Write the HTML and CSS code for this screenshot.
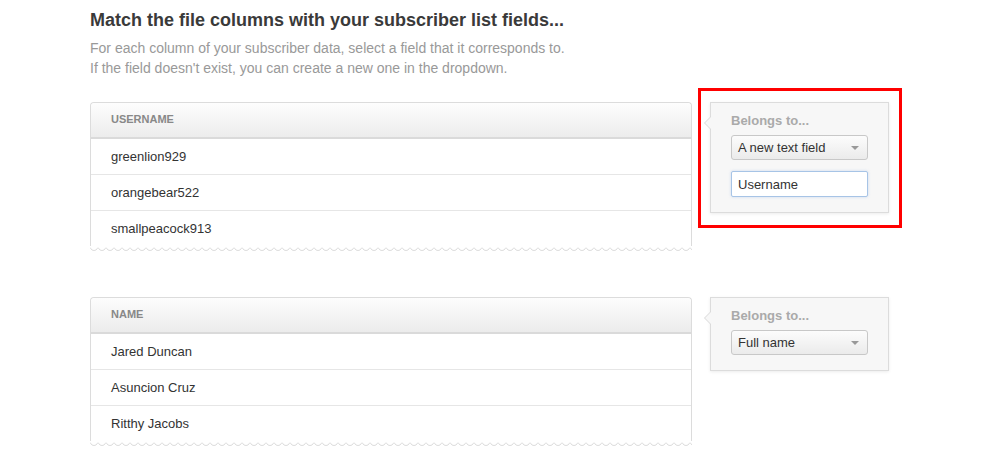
FILE: index.html
```html
<!DOCTYPE html>
<html lang="en">

<head>
    <meta charset="UTF-8" />
    <title>Match columns</title>
    <link rel="stylesheet" href="styles.css">
</head>

<body>
    <div class="page">
        <h1>Match the file columns with your subscriber list fields...</h1>
        <p class="intro">
            For each column of your subscriber data, select a field that it corresponds to.<br />
            If the field doesn't exist, you can create a new one in the dropdown.
        </p>

        <div class="column-row">
            <div class="card">
                <div class="card-body">
                    <div class="card-head">USERNAME</div>
                    <div class="card-row">greenlion929</div>
                    <div class="card-row">orangebear522</div>
                    <div class="card-row last">smallpeacock913</div>
                </div>
                <svg class="wave" width="602" height="6" viewBox="0 0 602 6">
                    <defs>
                        <pattern id="wave1" width="8" height="6" patternUnits="userSpaceOnUse">
                            <path d="M0 1.5 Q2 5 4 4.5 Q6 5 8 1.5" fill="none" stroke="#dcdcdc" stroke-width="1" />
                        </pattern>
                    </defs>
                    <rect x="0" y="0" width="602" height="6" fill="url(#wave1)" />
                </svg>
            </div>

            <div class="popover">
                <div class="label">Belongs to...</div>
                <div class="fake-select">A new text field<span class="caret"></span></div>
                <input class="field" type="text" value="Username" />
                <div class="highlight"></div>
            </div>
        </div>

        <div class="column-row">
            <div class="card">
                <div class="card-body">
                    <div class="card-head">NAME</div>
                    <div class="card-row">Jared Duncan</div>
                    <div class="card-row">Asuncion Cruz</div>
                    <div class="card-row last">Ritthy Jacobs</div>
                </div>
                <svg class="wave" width="602" height="6" viewBox="0 0 602 6">
                    <defs>
                        <pattern id="wave2" width="8" height="6" patternUnits="userSpaceOnUse">
                            <path d="M0 1.5 Q2 5 4 4.5 Q6 5 8 1.5" fill="none" stroke="#dcdcdc" stroke-width="1" />
                        </pattern>
                    </defs>
                    <rect x="0" y="0" width="602" height="6" fill="url(#wave2)" />
                </svg>
            </div>

            <div class="popover">
                <div class="label">Belongs to...</div>
                <div class="fake-select">Full name<span class="caret"></span></div>
            </div>
        </div>
    </div>
</body>

</html>
```

FILE: styles.css
```css
body {
    margin: 0;
    font-family: "Liberation Sans", Arial, sans-serif;
    background: #fff;
    color: #333;
}

.page {
    padding: 8px 0 0 90px;
}

h1 {
    margin: 0;
    font-size: 18px;
    line-height: 24px;
    font-weight: bold;
    color: #3a3a3a;
}

.intro {
    margin: 6px 0 24px;
    font-size: 14px;
    line-height: 20px;
    color: #999;
}

.column-row {
    display: flex;
    align-items: flex-start;
    gap: 18px;
    margin-bottom: 45px;
}

.card {
    width: 602px;
}

.card-body {
    border: 1px solid #dcdcdc;
    border-bottom: none;
    border-radius: 4px 4px 0 0;
    background: #fff;
}

.card-head {
    height: 34px;
    line-height: 33px;
    padding-left: 20px;
    font-size: 11px;
    font-weight: bold;
    color: #888;
    background: linear-gradient(#fdfdfd, #ececec);
    border-radius: 4px 4px 0 0;
    border-bottom: 2px solid #dadada;
}

.card-row {
    height: 35px;
    line-height: 35px;
    padding-left: 20px;
    font-size: 13px;
    color: #333;
    border-bottom: 1px solid #e6e6e6;
}

.card-row.last {
    border-bottom: none;
}

.wave {
    display: block;
}

/* 右側の吹き出し */
.popover {
    position: relative;
    width: 137px;
    padding: 10px 20px 15px;
    background: #f7f7f7;
    border: 1px solid #dcdcdc;
    box-shadow: 0 1px 3px rgba(0, 0, 0, 0.08);
}

.popover::before,
.popover::after {
    content: "";
    position: absolute;
    top: 13px;
    border-style: solid;
    border-color: transparent;
}

.popover::before {
    left: -7px;
    border-width: 7px 7px 7px 0;
    border-right-color: #d8d8d8;
}

.popover::after {
    left: -6px;
    border-width: 7px 7px 7px 0;
    border-right-color: #f7f7f7;
}

.label {
    font-size: 13px;
    line-height: 16px;
    font-weight: bold;
    color: #aaa;
}

.fake-select {
    position: relative;
    height: 23px;
    line-height: 23px;
    margin-top: 6px;
    padding-left: 6px;
    font-size: 13px;
    color: #333;
    border: 1px solid #c8c8c8;
    border-radius: 3px;
    background: linear-gradient(#fcfcfc, #ebebeb);
}

.caret {
    position: absolute;
    right: 8px;
    top: 10px;
    border-style: solid;
    border-width: 4px 4px 0 4px;
    border-color: #999 transparent transparent transparent;
}

.field {
    display: block;
    width: 137px;
    height: 26px;
    margin-top: 11px;
    padding: 0 6px;
    box-sizing: border-box;
    font-family: "Liberation Sans", Arial, sans-serif;
    font-size: 13px;
    color: #333;
    border: 1px solid #a7c4e6;
    border-radius: 2px;
    background: #fff;
    box-shadow: 0 0 3px rgba(120, 160, 220, 0.35);
    outline: none;
}

.highlight {
    position: absolute;
    top: -15px;
    left: -13px;
    right: -14px;
    bottom: -16px;
    border: 3px solid #f00;
    pointer-events: none;
}
```
